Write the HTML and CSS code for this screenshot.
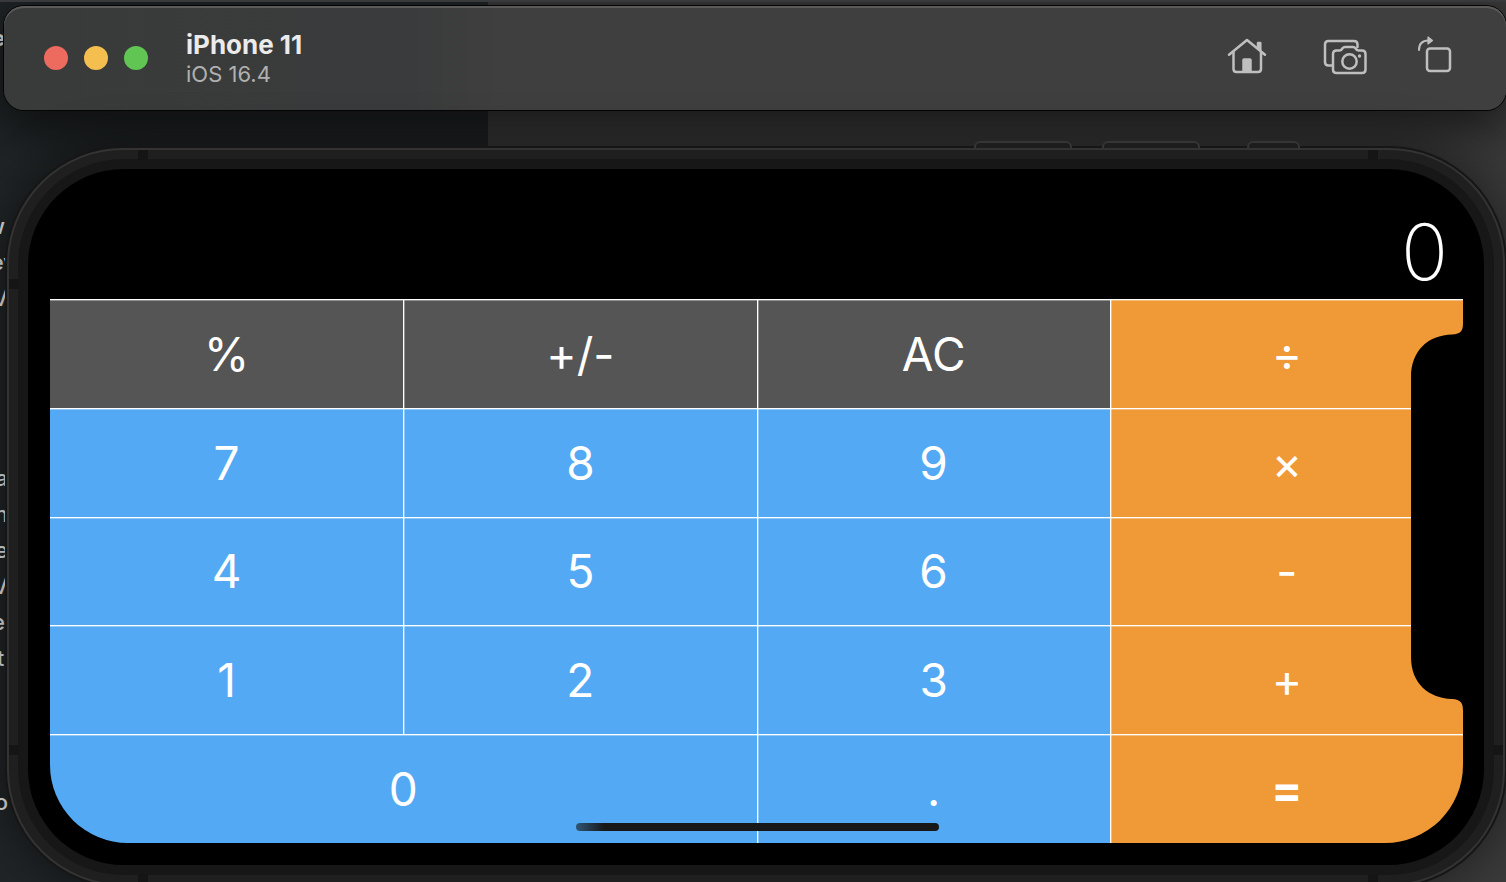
FILE: index.html
```html
<!DOCTYPE html>
<html lang="en">
<head>
<meta charset="utf-8">
<meta name="viewport" content="width=device-width, initial-scale=1">
<title>iPhone 11</title>
<link rel="stylesheet" href="styles.css">
</head>
<body>
<div class="desktop">
  <div class="editor" aria-hidden="true">
    <p class="editor-heading">e</p>
    <ul class="editor-list">
      <li>w</li><li class="overrun">ev</li><li class="wide">V</li><li></li><li></li><li></li><li></li>
      <li class="wide">a</li><li class="wide">n</li><li class="wide">e</li><li class="wide">V</li><li>e</li><li class="overrun">ts</li>
      <li></li><li></li><li></li><li class="full">o</li>
    </ul>
  </div>

  <div class="simulator">
    <header class="titlebar">
      <div class="lights">
        <button class="light close" type="button" aria-label="Close"></button>
        <button class="light minimize" type="button" aria-label="Minimize"></button>
        <button class="light expand" type="button" aria-label="Zoom"></button>
      </div>
      <div class="heading">
        <h1 class="device">iPhone 11</h1>
        <p class="system">iOS 16.4</p>
      </div>
      <div class="tools">
        <button class="tool home" type="button" aria-label="Home">
          <svg width="44" height="44" viewBox="0 0 44 44" fill="none" stroke="currentColor" stroke-width="2.500" stroke-linecap="round" stroke-linejoin="round">
            <path d="M4 20.800 22 6 40 20.800" />
            <path d="M8.500 18V35Q8.500 38 11.500 38H33Q36 38 36 35V18" />
            <path d="M33 13V9H35.300V16" fill="currentColor" />
            <path d="M18.500 37.500V26Q18.500 25.500 19 25.500H25Q25.500 25.500 25.500 26V37.500Z" fill="currentColor" />
          </svg>
        </button>
        <button class="tool" type="button" aria-label="Screenshot">
          <svg width="44" height="44" viewBox="0 0 44 44" fill="none" stroke="currentColor" stroke-width="2.500" stroke-linecap="round" stroke-linejoin="round">
            <path d="M9 31.500H5.500Q2 31.500 2 28V10.500Q2 7 5.500 7H31Q34.500 7 34.500 10.500V13" />
            <path d="M10 20Q10 16.500 13.500 16.500H16.500Q18 16.500 18.800 15.300L19.500 14.300Q20.500 13 22 13H30Q31.500 13 32.500 14.300L33.200 15.300Q34 16.500 35.500 16.500H39Q42.500 16.500 42.500 20V35.500Q42.500 39 39 39H13.500Q10 39 10 35.500Z" />
            <circle cx="26.500" cy="27.500" r="7.200" />
            <circle cx="36.500" cy="22" r="1.700" fill="currentColor" stroke="none" />
          </svg>
        </button>
        <button class="tool" type="button" aria-label="Rotate">
          <svg width="44" height="44" viewBox="0 0 44 44" fill="none" stroke="currentColor" stroke-width="2.500" stroke-linecap="round" stroke-linejoin="round">
            <rect x="14" y="14.500" width="23" height="22.500" rx="3" />
            <path d="M6 16Q6 6.500 15.500 6.500" stroke-width="2" />
            <path d="M15 3V10L19.500 6.500Z" fill="currentColor" stroke-width="1.200" />
          </svg>
        </button>
      </div>
    </header>

    <main class="phone">
      <div class="side-buttons">
        <span class="side-button"></span>
        <span class="side-button"></span>
        <span class="side-button short"></span>
      </div>
      <span class="band top start"></span>
      <span class="band top end"></span>
      <span class="band bottom start"></span>
      <span class="band bottom end"></span>
      <span class="band left upper"></span>
      <span class="band left lower"></span>
      <span class="band right lower"></span>
      <div class="bezel">
        <div class="glass">
          <output class="display">0</output>
          <div class="keys">
            <button class="key dark" type="button">%</button>
            <button class="key dark" type="button">+/-</button>
            <button class="key dark" type="button">AC</button>
            <button class="key operator" type="button">÷</button>
            <button class="key" type="button">7</button>
            <button class="key" type="button">8</button>
            <button class="key" type="button">9</button>
            <button class="key operator" type="button">×</button>
            <button class="key" type="button">4</button>
            <button class="key" type="button">5</button>
            <button class="key" type="button">6</button>
            <button class="key operator" type="button">-</button>
            <button class="key" type="button">1</button>
            <button class="key" type="button">2</button>
            <button class="key" type="button">3</button>
            <button class="key operator" type="button">+</button>
            <button class="key double" type="button">0</button>
            <button class="key" type="button">.</button>
            <button class="key operator equals" type="button">=</button>
            <span class="home-indicator"></span>
          </div>
          <svg class="notch" width="54" height="388" viewBox="0 0 54 388" aria-hidden="true">
            <path d="M54 0H52V0C52 8 50 11 41 11.500C17 12 0 28 0 54V334C0 360 17 375 41 376C50 376.500 52 380 52 388H54Z" />
          </svg>
        </div>
      </div>
    </main>
  </div>
</div>
</body>
</html>
```
FILE: styles.css
```css
* {
  box-sizing: border-box;
}

body,
h1,
p,
ul {
  margin: 0;
  padding: 0;
}

body {
  font-family: Inter, "Liberation Sans", sans-serif;
  background: #303030;
}

button {
  margin: 0;
  padding: 0;
  border: 0;
  font: inherit;
  color: inherit;
}

.desktop {
  position: relative;
  height: 100vh;
  overflow: hidden;
  background: linear-gradient(to right, #202426 488px, #3a3a3a 488px);
  border-top: 2px solid #38393b;
}

/* Editor window behind the simulator */
.editor {
  position: absolute;
  top: 0;
  left: 0;
  width: 8px;
  height: 100%;
  font-size: 22px;
  font-weight: 500;
  line-height: 36px;
  color: #e2e4e4;
}

.editor-heading,
.editor-list li {
  display: flex;
  justify-content: flex-end;
  height: 36px;
  padding-right: 3px;
}

.editor-heading {
  margin: 18px 0 152px;
  font-weight: 700;
}

.editor-list {
  list-style: none;
}

.editor-list .wide {
  padding-right: 0;
}

.editor-list .full {
  padding-right: 0;
}

.editor-list .overrun {
  margin-right: -8px;
  padding-right: 0;
}

.simulator {
  position: relative;
  display: flex;
  flex-direction: column;
  height: 100%;
  padding: 4px 0 0 4px;
}

.titlebar {
  display: flex;
  align-items: center;
  height: 104px;
  flex: none;
  padding: 0 49px 0 40px;
  border-radius: 20px;
  background: linear-gradient(to right, #393b3a, #3a3b3c 400px, #3f3f3f 500px);
  box-shadow: 0 0 0 1px #050505, inset 0 2px 0 #5b5b5b, 0 14px 50px 4px rgba(0, 0, 0, 0.6);
}

.lights {
  display: flex;
  gap: 16px;
}

.light {
  width: 24px;
  height: 24px;
  border-radius: 50%;
}

.close {
  background: #ed6a5e;
}

.minimize {
  background: #f5bf4f;
}

.expand {
  background: #61c554;
}

.heading {
  margin-left: 38px;
  padding-top: 2px;
}

.device {
  font-size: 26px;
  line-height: 30px;
  font-weight: 700;
  color: #ebebeb;
}

.system {
  font-size: 22px;
  line-height: 28px;
  color: #b0b0b0;
}

.tools {
  display: flex;
  gap: 46px;
  margin-left: auto;
  padding-bottom: 4px;
}

.tool {
  width: 44px;
  height: 44px;
  background: none;
  color: #bfbfbf;
}

.tool.home {
  margin-right: 8px;
}

.tool svg {
  display: block;
}

/* Device body; its lower edge runs off the window */
.phone {
  position: relative;
  flex: 1;
  display: flex;
  min-height: 0;
  margin: 38px 1px -4px 3px;
  padding: 9px;
  border: 2px solid #333;
  border-radius: 116px;
  background: #1f1f1f;
  box-shadow: 0 0 0 2px #161616, 0 0 44px 8px rgba(0, 0, 0, 0.4);
}

.side-buttons {
  position: absolute;
  top: -9px;
  right: 203px;
  display: flex;
}

.side-button {
  width: 98px;
  height: 7px;
  margin-right: 30px;
  border: 2px solid #353535;
  border-bottom: 0;
  border-radius: 6px 6px 0 0;
  background: #1d1d1d;
}

.side-button:nth-child(2) {
  margin-right: 47px;
}

.side-button.short {
  width: 53px;
  margin-right: 0;
}

.band {
  position: absolute;
  width: 10px;
  height: 10px;
  background: #151515;
}

.band.top {
  top: 0;
}

.band.bottom {
  bottom: 0;
}

.band.left {
  left: 0;
}

.band.right {
  right: 0;
}

.band.start {
  left: 129px;
}

.band.end {
  right: 125px;
}

.band.upper {
  top: 129px;
}

.band.lower {
  bottom: 129px;
}

.bezel {
  flex: 1;
  display: flex;
  padding: 10px;
  border-radius: 106px;
  background: #171717;
}

.glass {
  position: relative;
  flex: 1;
  display: flex;
  flex-direction: column;
  min-width: 0;
  padding: 0 21px 22px 22px;
  border-radius: 96px;
  background: #000;
}

.display {
  flex: none;
  height: 130px;
  padding: 36px 15px 0 0;
  font-size: 78px;
  font-weight: 200;
  line-height: 94px;
  text-align: right;
  color: #fff;
}

.keys {
  position: relative;
  flex: 1;
  display: grid;
  grid-template-columns: repeat(4, 1fr);
  grid-template-rows: repeat(5, 1fr);
  overflow: hidden;
  border-radius: 0 0 78px 78px;
}

.key {
  border-top: 1px solid #fff;
  border-left: 1px solid #fff;
  background: #53a9f3;
  box-shadow: inset 0 1px 0 rgba(255, 255, 255, 0.35), inset 1px 0 0 rgba(255, 255, 255, 0.35);
  font-size: 46px;
  font-weight: 400;
  line-height: 56px;
  color: #fff;
}

.key:nth-child(4n + 1) {
  border-left: 0;
  box-shadow: inset 0 1px 0 rgba(255, 255, 255, 0.35);
}

.key.dark {
  background: #555;
}

.key.operator {
  background: #f09a37;
}

.key.double {
  grid-column: span 2;
}

.key.equals {
  font-weight: 700;
}

.home-indicator {
  position: absolute;
  left: 50%;
  bottom: 12px;
  width: 363px;
  height: 8px;
  margin-left: -181px;
  border-radius: 4px;
  background: linear-gradient(to right, #2f5575, #181818 28px);
}

.notch {
  position: absolute;
  top: 50%;
  right: 19px;
  margin-top: -194px;
}
```
